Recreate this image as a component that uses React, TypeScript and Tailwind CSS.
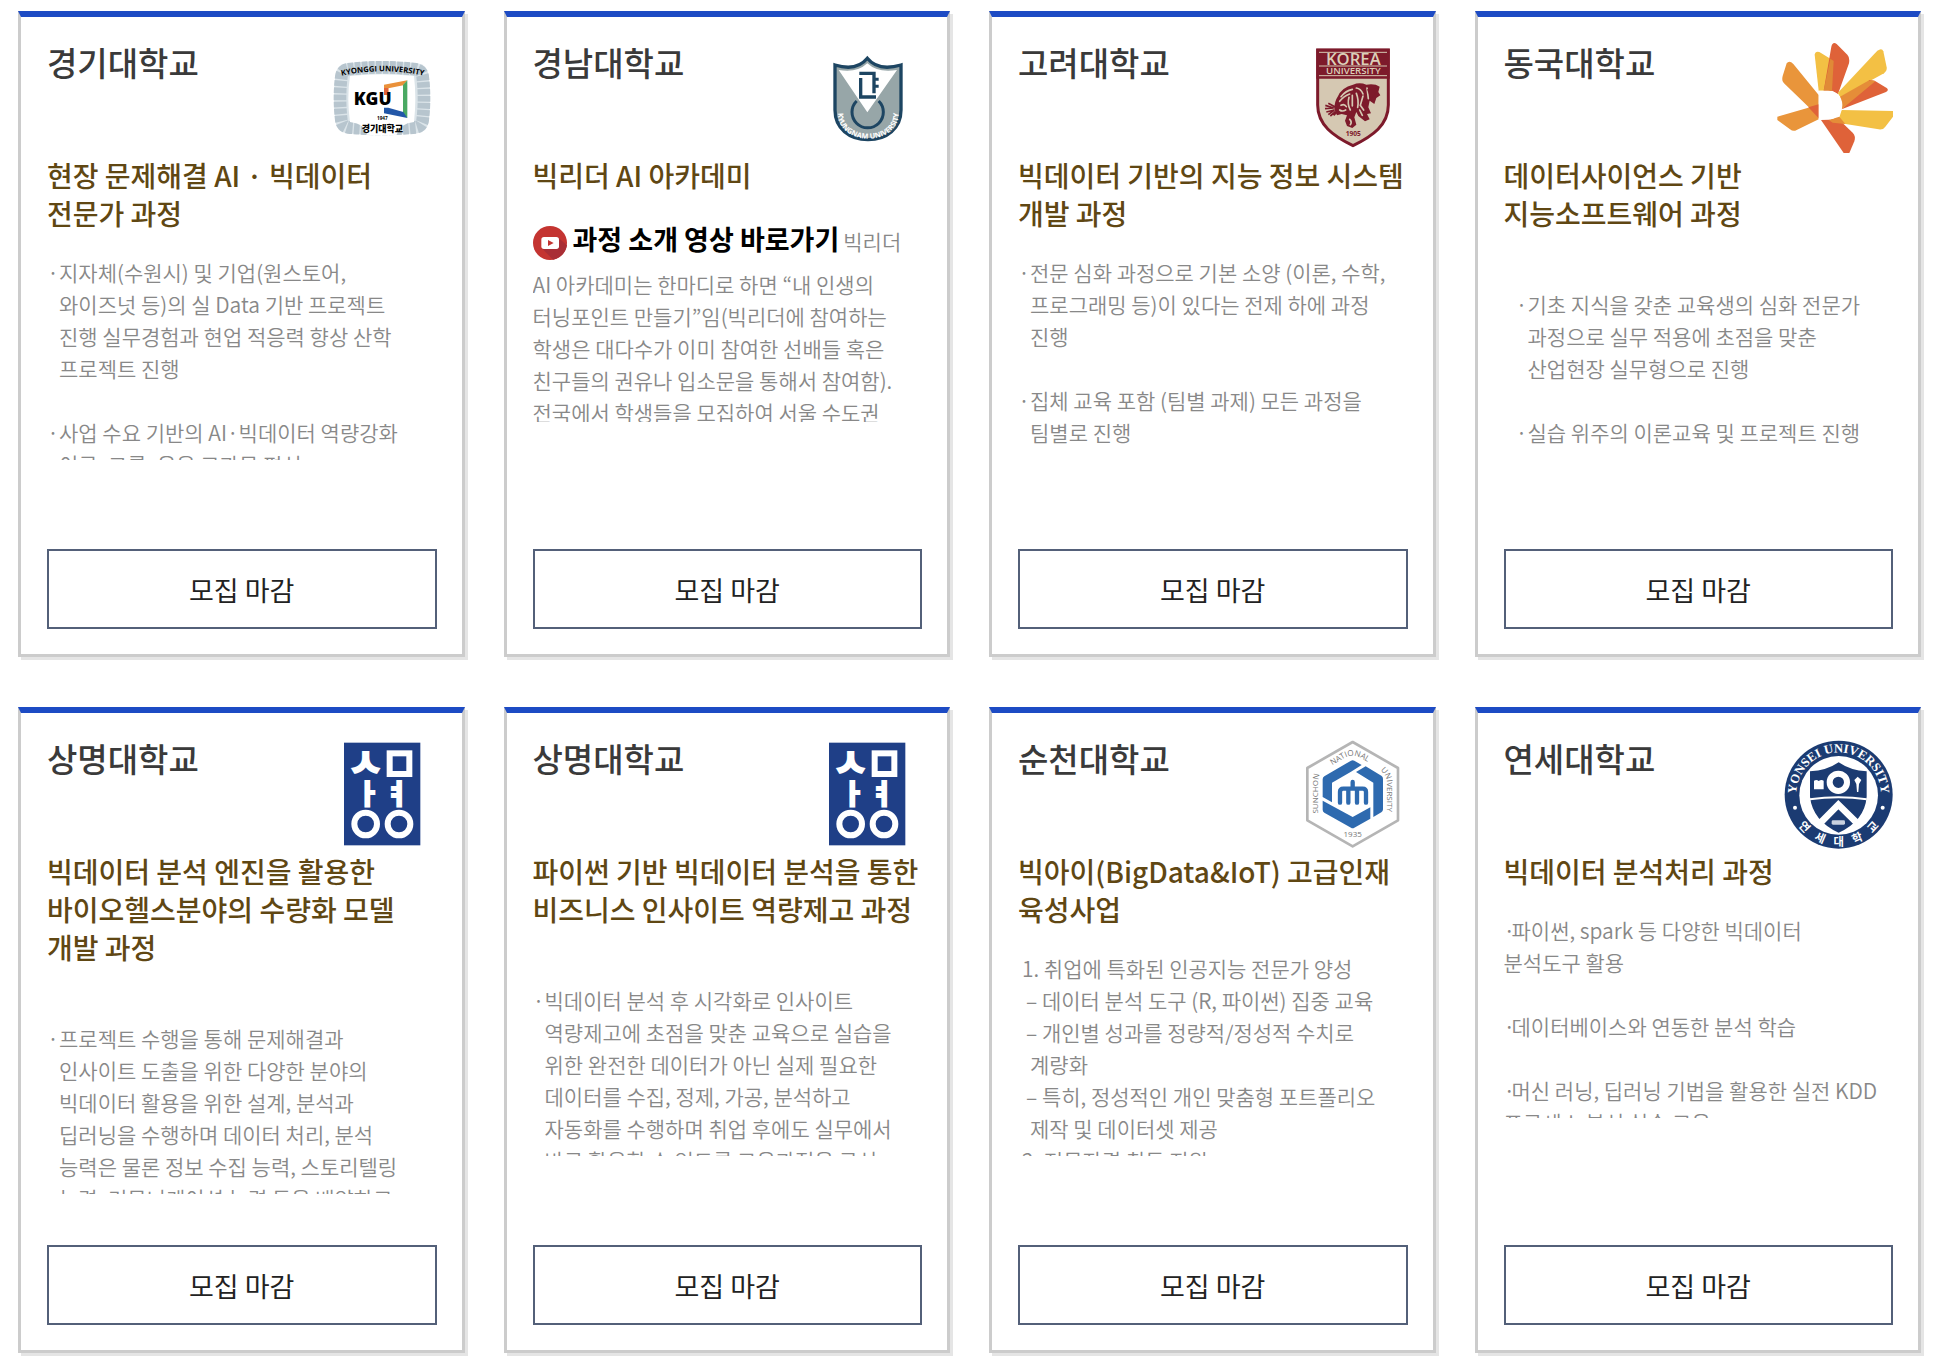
import type { ReactNode } from "react";

const sans = "font-['Noto_Sans_CJK_KR',sans-serif]";

function Logo({ label, viewBox, children }: { label: string; viewBox: string; children: ReactNode }) {
  return (
    <svg role="img" aria-label={label} viewBox={viewBox} className="h-[110px] w-[116px] shrink-0">
      {children}
    </svg>
  );
}

function KyonggiLogo() {
  return (
    <Logo label="경기대학교 로고" viewBox="3 9 348 330">
      <path d="M80 70Q186 58 292 70Q322 74 326 106Q334 174 326 244Q322 276 292 280Q186 290 80 280Q50 276 46 244Q38 174 46 106Q50 74 80 70Z" fill="#dbe4e9" />
      <path d="M84 88Q186 76 288 88Q306 92 308 110Q316 174 308 240Q306 258 288 262Q186 272 84 262Q66 258 64 240Q56 174 64 110Q66 92 84 88Z" fill="none" stroke="#b7c5ce" strokeWidth="38" strokeDasharray="17 4" />
      <path d="M90 108Q186 98 282 108Q290 174 282 246Q240 250 230 284Q186 288 142 284Q136 252 90 246Q80 174 90 108Z" fill="#fff" />
      <path id="kgu-arc" d="M70 106Q186 82 306 106" fill="none" />
      <text fontSize="23" className="fill-black font-['Open_Sans',sans-serif] font-bold" textAnchor="middle">
        <textPath href="#kgu-arc" startOffset="50%">KYONGGI UNIVERSITY</textPath>
      </text>
      <path d="M192 134L262 121L250 136L205 145V160H192Z" fill="#ea913a" />
      <path d="M192 144H205V165H192Z" fill="#e2643a" />
      <path d="M262 121V234L249 222V135Z" fill="#4aa963" />
      <path d="M192 203H205L250 216L262 234L192 220Z" fill="#2257a8" />
      <text x="101" y="194" fontSize="52" className="fill-black font-['Open_Sans',sans-serif] font-extrabold">KGU</text>
      <text x="187" y="241" fontSize="14" textAnchor="middle" className="fill-black font-['Open_Sans',sans-serif] font-bold">1947</text>
      <text x="187" y="275" fontSize="27" textAnchor="middle" className="fill-black font-['Noto_Sans_CJK_KR',sans-serif] font-black">경기대학교</text>
    </Logo>
  );
}

function KyungnamLogo() {
  return (
    <Logo label="경남대학교 로고" viewBox="948 129 348 330">
      <path d="M1043 206Q1100 220 1132 186Q1164 220 1224 206L1132 337Z" fill="#fff" />
      <path d="M1035 195Q1100 215 1132 175Q1164 215 1233 195V330C1233 385 1190 419 1134 419C1078 419 1035 385 1035 330Z" fill="#97a6a8" />
      <path d="M1046 210Q1100 220 1132 190Q1164 220 1221 210L1132 337Z" fill="#fff" />
      <path d="M1035 195Q1100 215 1132 175Q1164 215 1233 195V330C1233 385 1190 419 1134 419C1078 419 1035 385 1035 330Z" fill="none" stroke="#1d4562" strokeWidth="10" />
      <path d="M1108 220H1152V280M1112 234V291H1158" fill="none" stroke="#1d4562" strokeWidth="10" />
      <path d="M1152 238H1166M1152 259H1166" fill="none" stroke="#1d4562" strokeWidth="9" />
      <path d="M1100 303A47 47 0 1 0 1166 303" fill="none" stroke="#1d4562" strokeWidth="9" />
      <path id="kn-arc" d="M1044 345A88 69 0 0 0 1226 345" fill="none" />
      <text fontSize="22" textAnchor="middle" className="fill-white font-['Open_Sans',sans-serif] font-bold">
        <textPath href="#kn-arc" startOffset="50%">KYUNGNAM UNIVERSITY</textPath>
      </text>
    </Logo>
  );
}

function KoreaLogo() {
  return (
    <Logo label="고려대학교 로고" viewBox="3 39 348 330">
      <path d="M80 60H292V225C292 285 245 318 186 347C127 318 80 285 80 225Z" fill="#d5c8b2" stroke="#7d1a2b" strokeWidth="9" />
      <path d="M76 56H296V146H76Z" fill="#7d1a2b" />
      <path d="M84 67H288M84 108H288M84 137H288" stroke="#d5c8b2" strokeWidth="3" />
      <text x="187" y="104" fontSize="50" textAnchor="middle" className="fill-[#dccfb9] font-['Open_Sans',sans-serif] font-semibold">KOREA</text>
      <text x="187" y="132" fontSize="29" textAnchor="middle" className="fill-[#dccfb9] font-['Open_Sans',sans-serif] font-semibold">UNIVERSITY</text>
      <path d="M140 200Q152 172 186 164Q206 156 226 164Q252 160 266 170L262 186L268 196L256 204L250 222L236 212L232 232L240 250L228 252L236 268L222 274L202 258L196 246L190 262L196 284L184 294L168 288L162 272L168 256L152 252L138 256L130 238Q130 214 140 200Z" fill="#7d1a2b" />
      <path d="M103 226L128 234L102 236M106 246L130 240L112 254M112 220L134 232M118 258L134 244M128 256L138 246" fill="none" stroke="#7d1a2b" strokeWidth="5" />
      <path d="M150 200Q164 182 184 178M146 214Q158 198 176 192M196 174Q210 176 216 192M184 196V228M196 190Q204 210 200 232M174 202Q168 222 178 240M150 226Q160 220 166 230M146 240Q154 246 164 240M216 198L208 226L218 240M228 174L232 206M206 240L214 256M176 268Q184 276 178 284" fill="none" stroke="#d5c8b2" strokeWidth="5" strokeLinecap="round" />
      <path d="M228 178L262 176L240 208Z" fill="#7d1a2b" />
      <text x="187" y="319" fontSize="20" textAnchor="middle" className="fill-[#7d1a2b] font-['Open_Sans',sans-serif] font-bold">1905</text>
    </Logo>
  );
}

function DonggukLogo() {
  return (
    <Logo label="동국대학교 로고" viewBox="963 129 348 330">
      <path d="M992 190Q1000 180 1012 192L1088 285V355L1057 320L984 250Q976 242 980 228Z" fill="#e9953b" />
      <path d="M964 350L1088 314V358L1022 390Q1012 396 1002 388L964 360Z" fill="#e9953b" />
      <path d="M1057 322L1088 313V355Z" fill="#df6239" />
      <path d="M1076 164Q1078 152 1090 156L1133 182L1128 272H1088Z" fill="#f3c044" />
      <path d="M1126 140Q1130 124 1142 132L1174 164Q1182 172 1179 190L1146 282L1128 272H1103Z" fill="#df6239" />
      <path d="M1123 176L1133 183L1128 272H1103Z" fill="#e08a37" />
      <path d="M1264 152Q1278 142 1282 154L1292 202Q1294 212 1284 220L1153 292L1145 279Z" fill="#f3c044" />
      <path d="M1157 328L1240 240L1256 242L1292 264Q1300 270 1290 276Z" fill="#df6239" />
      <path d="M1152 290L1230 246Q1244 236 1258 244L1157 328Z" fill="#e58d38" />
      <path d="M1157 330L1311 333V350L1288 380Q1282 390 1268 388L1145 368Z" fill="#f3c044" />
      <path d="M1095 360L1148 358L1190 398Q1200 408 1195 424L1180 459H1163Z" fill="#df6239" />
      <path d="M1118 360L1150 350L1168 372L1130 368Z" fill="#e58d38" />
      <path d="M1088 272h28a43 43 0 0 1 0 86h-28z" fill="#fff" />
    </Logo>
  );
}

function SangmyungLogo() {
  return (
    <Logo label="상명대학교 로고" viewBox="963 117 348 330">
      <rect x="1032" y="128" width="229" height="308" fill="#1f3f87" />
      <g textAnchor="middle" strokeWidth="6" className="fill-white stroke-white font-['Noto_Sans_CJK_KR',sans-serif] font-bold">
        <text x="1097" y="231" fontSize="118">ㅅ</text>
        <text x="1104" y="311" fontSize="82">ㅏ</text>
        <text x="1190" y="311" fontSize="82">ㅕ</text>
      </g>
      <g fill="none" stroke="#fff" strokeWidth="18">
        <rect x="1169" y="160" width="59" height="62" />
        <circle cx="1097" cy="372" r="34" />
        <circle cx="1197" cy="372" r="34" />
      </g>
    </Logo>
  );
}

function SunchonLogo() {
  return (
    <Logo label="순천대학교 로고" viewBox="963 117 348 330">
      <path d="M1145 126L1281 204V361L1145 439L1009 361V204Z" fill="none" stroke="#b5b5b5" strokeWidth="8" strokeLinejoin="round" />
      <g fill="#2e6aaf">
        <path d="M1055 291V238Q1055 232 1060 229L1140 182Q1145 179 1150 182L1172 195L1140 215L1083 248V307Z" />
        <path d="M1155 216L1184 199L1231 227Q1236 230 1236 236V328Q1236 334 1231 337L1207 351V248Z" />
        <path d="M1055 302L1145 351L1198 322V356L1150 383Q1145 386 1140 383L1060 338Q1055 335 1055 329Z" />
      </g>
      <path d="M1107 308V276q0-10 10-10h58q10 0 10 10V308M1132 266V308M1158 266V308M1145 246V266" fill="none" stroke="#2e6aaf" strokeWidth="13" strokeLinecap="round" />
      <path id="sc-left" d="M1042 360V246Q1042 232 1052 204" fill="none" />
      <path id="sc-top" d="M1068 206L1120 174Q1145 160 1170 174L1206 196" fill="none" />
      <path id="sc-right" d="M1212 198Q1248 220 1248 250V356" fill="none" />
      <g fontSize="24" textAnchor="middle" className="fill-[#777777] font-['Open_Sans',sans-serif]">
        <text><textPath href="#sc-left" startOffset="50%">SUNCHON</textPath></text>
        <text><textPath href="#sc-top" startOffset="50%">NATIONAL</textPath></text>
        <text><textPath href="#sc-right" startOffset="50%">UNIVERSITY</textPath></text>
        <text x="1145" y="410">1935</text>
      </g>
    </Logo>
  );
}

function YonseiLogo() {
  return (
    <Logo label="연세대학교 로고" viewBox="963 117 348 330">
      <circle cx="1148" cy="284" r="162" fill="#1b3b72" />
      <circle cx="1148" cy="286" r="118" fill="#fff" />
      <path d="M1062 214Q1112 212 1148 187Q1184 212 1232 214V290Q1226 362 1148 398Q1070 362 1062 290Z" fill="#1b3b72" />
      <path d="M1062 298Q1148 286 1232 298" fill="none" stroke="#fff" strokeWidth="6" />
      <circle cx="1147" cy="247" r="26" fill="none" stroke="#fff" strokeWidth="18" />
      <path d="M1074 242Q1082 238 1088 243Q1096 238 1103 242V268H1074Z" fill="#fff" />
      <path d="M1205 230L1216 240L1209 252L1207 276H1203L1201 252L1195 240Z" fill="#fff" />
      <path d="M1088 374L1147 314L1208 374" fill="none" stroke="#fff" strokeWidth="20" />
      <rect x="1127" y="361" width="40" height="13" rx="4" fill="#c9d1df" />
      <circle cx="1017" cy="323" r="6" fill="#fff" />
      <circle cx="1280" cy="323" r="6" fill="#fff" />
      <path id="ys-top" d="M1022 300A127 127 0 1 1 1274 300" fill="none" />
      <path id="ys-bottom" d="M1000 320A152 152 0 0 0 1296 320" fill="none" />
      <text fontSize="38" textAnchor="middle" className="fill-white font-['Liberation_Serif',serif] font-bold">
        <textPath href="#ys-top" startOffset="50%">YONSEI UNIVERSITY</textPath>
      </text>
      <text fontSize="34" textAnchor="middle" className="fill-white font-['Noto_Sans_CJK_KR',sans-serif] font-bold">
        <textPath href="#ys-bottom" startOffset="50%">연&#160;&#160;&#160;&#160;세&#160;&#160;&#160;&#160;대&#160;&#160;&#160;&#160;학&#160;&#160;&#160;&#160;교</textPath>
      </text>
    </Logo>
  );
}

function PlayIcon() {
  return (
    <svg aria-hidden="true" viewBox="126 678 102 102" className="mt-2 h-[34px] w-[34px] shrink-0">
      <circle cx="177" cy="729" r="51" fill="#c43431" />
      <path d="M154 746L200 712L228 736Q222 770 186 779Z" fill="#a92e35" />
      <rect x="151" y="711" width="53" height="36" rx="8" fill="#fff" />
      <path d="M171 720L188 729L171 738Z" fill="#c43431" />
    </svg>
  );
}

function Bullet({ children }: { children: ReactNode }) {
  return (
    <li className="flex">
      <span className="w-3 shrink-0 text-center">·</span>
      <span>{children}</span>
    </li>
  );
}

// bullet without a hanging indent
function Dot() {
  return <span className="inline-block w-2">·</span>;
}

type Course = { school: string; logo: ReactNode; title: ReactNode; body: ReactNode };

const courses: Course[] = [
  {
    school: "경기대학교",
    logo: <KyonggiLogo />,
    title: <>현장 문제해결 AI · 빅데이터<br />전문가 과정</>,
    body: (
      <ul className="space-y-8">
        <Bullet>지자체(수원시) 및 기업(원스토어,<br />와이즈넛 등)의 실 Data 기반 프로젝트<br />진행 실무경험과 현업 적응력 향상 산학<br />프로젝트 진행</Bullet>
        <Bullet>사업 수요 기반의 AI·빅데이터 역량강화<br />이론, 그룹, 응용 교과목 편성</Bullet>
      </ul>
    ),
  },
  {
    school: "경남대학교",
    logo: <KyungnamLogo />,
    title: "빅리더 AI 아카데미",
    body: (
      <>
        <div className="flex h-[50px] items-start">
          <a href="#intro" className="flex text-[27px] font-bold text-black">
            <PlayIcon />
            <span className="ml-1.5 leading-[42px]">과정 소개 영상 바로가기</span>
          </a>
          <span className="ml-1 leading-[46px]">빅리더</span>
        </div>
        <p>AI 아카데미는 한마디로 하면 “내 인생의<br />터닝포인트 만들기”임(빅리더에 참여하는<br />학생은 대다수가 이미 참여한 선배들 혹은<br />친구들의 권유나 입소문을 통해서 참여함).<br />전국에서 학생들을 모집하여 서울 수도권</p>
      </>
    ),
  },
  {
    school: "고려대학교",
    logo: <KoreaLogo />,
    title: <>빅데이터 기반의 지능 정보 시스템<br />개발 과정</>,
    body: (
      <ul className="space-y-8">
        <Bullet>전문 심화 과정으로 기본 소양 (이론, 수학,<br />프로그래밍 등)이 있다는 전제 하에 과정<br />진행</Bullet>
        <Bullet>집체 교육 포함 (팀별 과제) 모든 과정을<br />팀별로 진행</Bullet>
      </ul>
    ),
  },
  {
    school: "동국대학교",
    logo: <DonggukLogo />,
    title: <>데이터사이언스 기반<br />지능소프트웨어 과정</>,
    body: (
      <ul className="space-y-8 pt-8 pl-3">
        <Bullet>기초 지식을 갖춘 교육생의 심화 전문가<br />과정으로 실무 적용에 초점을 맞춘<br />산업현장 실무형으로 진행</Bullet>
        <Bullet>실습 위주의 이론교육 및 프로젝트 진행</Bullet>
      </ul>
    ),
  },
  {
    school: "상명대학교",
    logo: <SangmyungLogo />,
    title: <>빅데이터 분석 엔진을 활용한<br />바이오헬스분야의 수량화 모델<br />개발 과정</>,
    body: (
      <ul className="pt-8">
        <Bullet>프로젝트 수행을 통해 문제해결과<br />인사이트 도출을 위한 다양한 분야의<br />빅데이터 활용을 위한 설계, 분석과<br />딥러닝을 수행하며 데이터 처리, 분석<br />능력은 물론 정보 수집 능력, 스토리텔링<br />능력, 커뮤니케이션 능력 등을 배양하고</Bullet>
      </ul>
    ),
  },
  {
    school: "상명대학교",
    logo: <SangmyungLogo />,
    title: <>파이썬 기반 빅데이터 분석을 통한<br />비즈니스 인사이트 역량제고 과정</>,
    body: (
      <ul className="pt-8">
        <Bullet>빅데이터 분석 후 시각화로 인사이트<br />역량제고에 초점을 맞춘 교육으로 실습을<br />위한 완전한 데이터가 아닌 실제 필요한<br />데이터를 수집, 정제, 가공, 분석하고<br />자동화를 수행하며 취업 후에도 실무에서<br />바로 활용할 수 있도록 교육과정을 구성</Bullet>
      </ul>
    ),
  },
  {
    school: "순천대학교",
    logo: <SunchonLogo />,
    title: <>빅아이(BigData&amp;IoT) 고급인재<br />육성사업</>,
    body: (
      <ul className="pl-3">
        <li className="-indent-2">1. 취업에 특화된 인공지능 전문가 양성</li>
        <li className="-indent-1">– 데이터 분석 도구 (R, 파이썬) 집중 교육</li>
        <li className="-indent-1">– 개인별 성과를 정량적/정성적 수치로<br />계량화</li>
        <li className="-indent-1">– 특히, 정성적인 개인 맞춤형 포트폴리오<br />제작 및 데이터셋 제공</li>
        <li className="-indent-2">2. 전문자격 취득 지원</li>
      </ul>
    ),
  },
  {
    school: "연세대학교",
    logo: <YonseiLogo />,
    title: "빅데이터 분석처리 과정",
    body: (
      <ul className="space-y-8">
        <li><Dot />파이썬, spark 등 다양한 빅데이터<br />분석도구 활용</li>
        <li><Dot />데이터베이스와 연동한 분석 학습</li>
        <li><Dot />머신 러닝, 딥러닝 기법을 활용한 실전 KDD<br />프로세스 분석 실습 교육</li>
      </ul>
    ),
  },
];

function CourseCard({ school, logo, title, body }: Course) {
  return (
    <article className="flex min-h-[646px] flex-col border-[3px] border-t-[6px] border-[#cccccc] border-t-[#1d4bc4] bg-white pt-[26px] pr-[25px] pb-[25px] pl-[26px] shadow-[3px_3px_0_#e5e5e5]">
      <div className="flex items-start justify-between">
        <h2 className="text-[33px] leading-[38px] font-medium text-[#3a3a3a]">{school}</h2>
        {logo}
      </div>
      <h3 className="mt-[3px] text-[28px] leading-[38px] font-medium whitespace-nowrap text-[#604713]">{title}</h3>
      <div className="mt-6 max-h-[204px] overflow-hidden text-[21px] leading-8 font-[350] whitespace-nowrap text-[#888888]">{body}</div>
      <button type="button" className="mt-auto h-20 w-full shrink-0 border-2 border-[#536079] pt-0.5 text-[27px] text-[#222222]">
        모집 마감
      </button>
    </article>
  );
}

export default function App() {
  return (
    <main className={`grid grid-cols-4 gap-x-[39px] gap-y-[50px] bg-white pt-[11px] pr-[25px] pb-[7px] pl-[18px] ${sans}`}>
      {courses.map((course, i) => (
        <CourseCard key={i} {...course} />
      ))}
    </main>
  );
}
